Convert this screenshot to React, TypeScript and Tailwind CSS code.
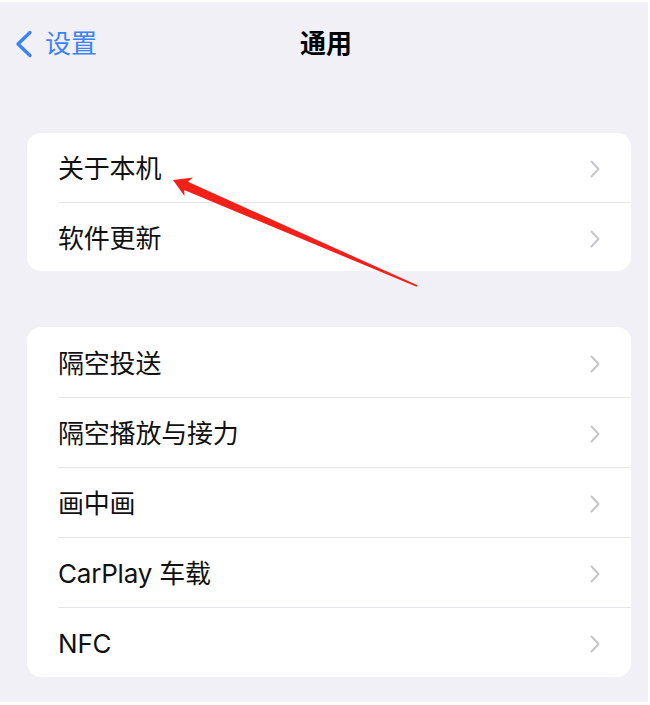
import React from 'react';

interface Row {
  label: string;
}

const groups: Row[][] = [
  [{ label: '关于本机' }, { label: '软件更新' }],
  [
    { label: '隔空投送' },
    { label: '隔空播放与接力' },
    { label: '画中画' },
    { label: 'CarPlay 车载' },
    { label: 'NFC' },
  ],
];

const font = { fontFamily: 'Inter, "Noto Sans CJK SC", sans-serif' };

const Chevron: React.FC = () => (
  <svg width="12" height="20" viewBox="0 0 12 20" className="shrink-0">
    <path d="M2.5 2.5 L9.5 10 L2.5 17.5" fill="none" stroke="#c6c6ca" strokeWidth="2" strokeLinecap="round" strokeLinejoin="round" />
  </svg>
);

const SettingsGroup: React.FC<{ rows: Row[]; rowHeight: string }> = ({ rows, rowHeight }) => (
  <div className="ml-[27px] w-[604px] bg-white rounded-[14px] overflow-hidden">
    {rows.map((row, i) => (
      <div key={row.label} className={`${rowHeight} flex flex-col pl-[31px]`}>
        {i > 0 && <div className="h-px bg-[#e4e4e9]" />}
        <div className="flex-1 flex items-center justify-between pr-[30px] pt-[3px]">
          <span className="text-[26px] text-[#111] leading-none tracking-[-0.2px]">{row.label}</span>
          <Chevron />
        </div>
      </div>
    ))}
  </div>
);

export default function App() {
  return (
    <div className="w-[650px] h-[705px] bg-white relative overflow-hidden" style={font}>
      <div className="mt-[2px] mr-[2px] h-[700px] bg-[#f1f0f6]">
        {/* navigation bar */}
        <div className="relative h-[84px] flex items-center">
          <div className="flex items-center pl-[14px] gap-[11px] text-[#3a82f6]">
            <svg width="20" height="28" viewBox="0 0 20 28">
              <path d="M16 2.5 L4 14 L16 25.5" fill="none" stroke="#3a82f6" strokeWidth="3.4" strokeLinecap="round" strokeLinejoin="round" />
            </svg>
            <span className="text-[26px] leading-none">设置</span>
          </div>
          <span className="absolute left-1/2 -translate-x-1/2 ml-[2px] text-[26px] font-bold text-black leading-none">通用</span>
        </div>

        <div className="mt-[47px] flex flex-col gap-[56px]">
          <SettingsGroup rows={groups[0]} rowHeight="h-[69px]" />
          <SettingsGroup rows={groups[1]} rowHeight="h-[70px]" />
        </div>
      </div>

      {/* red pointer arrow */}
      <svg className="absolute inset-0 pointer-events-none" width="650" height="705" viewBox="0 0 650 705">
        <polygon
          points="173,180 193,177.5 188,181.8 417.5,285.3 416.6,286.7 184.2,190 184.5,196"
          fill="#f3201a"
        />
      </svg>
    </div>
  );
}
